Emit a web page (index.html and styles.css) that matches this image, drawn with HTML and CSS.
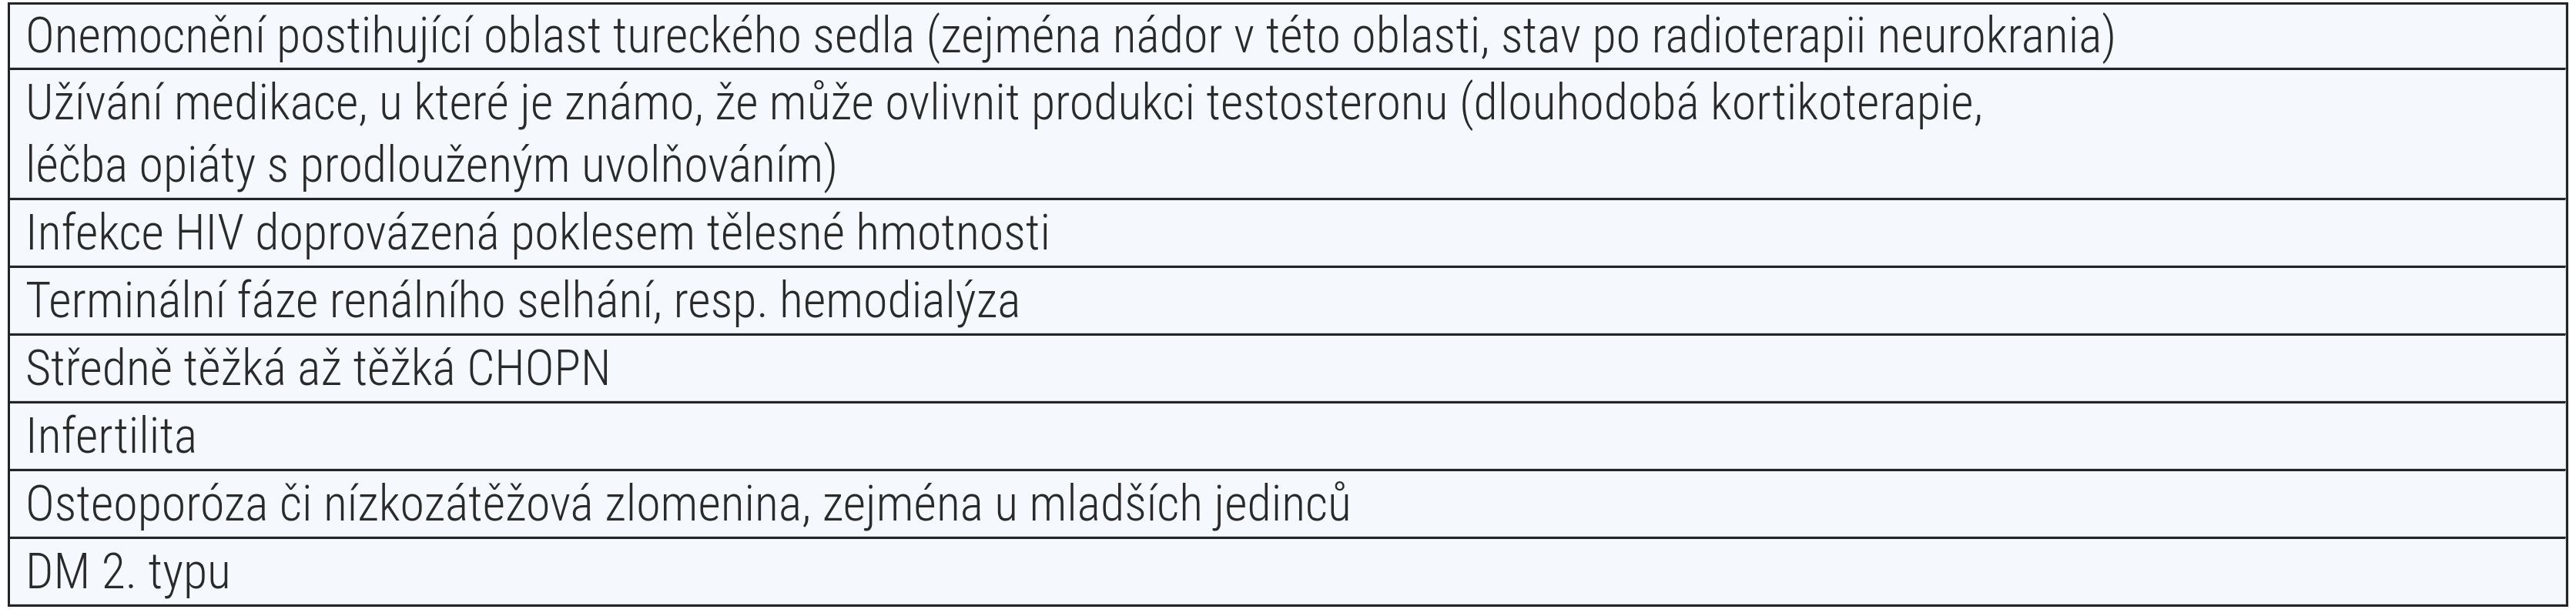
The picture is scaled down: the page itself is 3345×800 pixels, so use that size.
FILE: index.html
```html
<!DOCTYPE html>
<html lang="cs">
<head>
<meta charset="utf-8">
<title>Tabulka</title>
<link rel="stylesheet" href="styles.css">
</head>
<body>
<div class="table">
  <div class="row first">Onemocnění postihující oblast tureckého sedla (zejména nádor v této oblasti, stav po radioterapii neurokrania)</div>
  <div class="row">Užívání medikace, u které je známo, že může ovlivnit produkci testosteronu (dlouhodobá kortikoterapie,<br>léčba opiáty s prodlouženým uvolňováním)</div>
  <div class="row">Infekce HIV doprovázená poklesem tělesné hmotnosti</div>
  <div class="row">Terminální fáze renálního selhání, resp. hemodialýza</div>
  <div class="row">Středně těžká až těžká CHOPN</div>
  <div class="row">Infertilita</div>
  <div class="row">Osteoporóza či nízkozátěžová zlomenina, zejména u mladších jedinců</div>
  <div class="row">DM 2. typu</div>
</div>
</body>
</html>
```
FILE: styles.css
```css
html, body {
  margin: 0;
  padding: 0;
  background: #ffffff;
}

body {
  padding: 3px 0 0 10px;
}

.table {
  width: 3325px;
  box-sizing: border-box;
  border: 3px solid #222426;
  background: #f5f9fd;
  font-family: "Roboto Condensed", "Roboto", "Liberation Sans", sans-serif;
  font-weight: 300;
  font-size: 64px;
  line-height: 81px;
  color: #2a2a2a;
}

.row {
  padding: 2px 20px 1px 20px;
  border-bottom: 1px solid #d4d8dc;
  border-right: 1px solid #d4d8dc;
  white-space: nowrap;
}

.row.first {
  padding-top: 0;
  padding-bottom: 0;
}

.row + .row {
  border-top: 3px solid #222426;
}
```
